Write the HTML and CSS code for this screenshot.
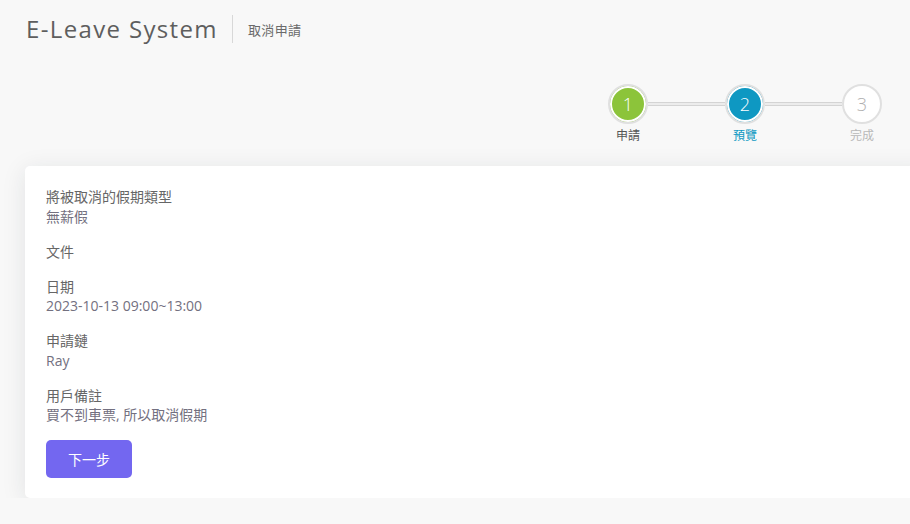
FILE: index.html
```html
<!DOCTYPE html>
<html lang="zh-Hant">
<head>
<meta charset="utf-8">
<title>E-Leave System</title>
<link rel="stylesheet" href="styles.css">
</head>
<body>
<header class="header">
  <h1 class="title">E-Leave System</h1>
  <span class="divider"></span>
  <span class="subtitle">取消申請</span>
</header>

<div class="steps">
  <div class="step done">
    <div class="circle">1</div>
    <div class="step-label">申請</div>
  </div>
  <div class="connector"></div>
  <div class="step active">
    <div class="circle">2</div>
    <div class="step-label">預覽</div>
  </div>
  <div class="connector"></div>
  <div class="step todo">
    <div class="circle">3</div>
    <div class="step-label">完成</div>
  </div>
</div>

<main class="card">
  <div class="field">
    <div class="label">將被取消的假期類型</div>
    <div class="value">無薪假</div>
  </div>
  <div class="field">
    <div class="label">文件</div>
  </div>
  <div class="field">
    <div class="label">日期</div>
    <div class="value">2023-10-13 09:00~13:00</div>
  </div>
  <div class="field">
    <div class="label">申請鏈</div>
    <div class="value">Ray</div>
  </div>
  <div class="field">
    <div class="label">用戶備註</div>
    <div class="value">買不到車票, 所以取消假期</div>
  </div>
  <button class="btn">下一步</button>
</main>
</body>
</html>
```

FILE: styles.css
```css
html, body {
  margin: 0;
  padding: 0;
}
body {
  background: #f8f8f8;
  font-family: "Open Sans", "Noto Sans CJK TC", sans-serif;
  color: #6e6b7b;
  overflow: hidden;
}
.header {
  display: flex;
  align-items: center;
  padding: 14px 26px 0 26px;
  height: 30px;
}
.title {
  margin: 0;
  font-size: 24px;
  font-weight: 400;
  color: #5e5e5e;
  letter-spacing: 1.35px;
  line-height: 30px;
}
.divider {
  width: 1px;
  height: 28px;
  background: #d8d8d8;
  margin: 0 15px 0 14px;
}
.subtitle {
  font-size: 13px;
  color: #6a6a6a;
  letter-spacing: 0.4px;
}
.steps {
  display: flex;
  justify-content: flex-end;
  padding: 40px 28px 0 0;
  height: 82px;
}
.step {
  display: flex;
  flex-direction: column;
  align-items: center;
  width: 40px;
}
.circle {
  width: 40px;
  height: 40px;
  box-sizing: border-box;
  border-radius: 50%;
  border: 2px solid #e0e0e0;
  box-shadow: inset 0 0 0 2px #fff;
  display: flex;
  align-items: center;
  justify-content: center;
  font-size: 18px;
  font-weight: 300;
  color: #fff;
}
.done .circle { background: #8cc43a; }
.active .circle { background: #0e98c2; }
.todo .circle { background: #fff; color: #b0b0b0; }
.step-label {
  margin-top: 3px;
  font-size: 12px;
  line-height: 18px;
  white-space: nowrap;
}
.done .step-label { color: #555; }
.active .step-label { color: #0e98c2; }
.todo .step-label { color: #b8b8b8; }
.connector {
  width: 77px;
  height: 4px;
  box-sizing: border-box;
  margin-top: 18px;
  background: #ececec;
  border-top: 1px solid #d4d4d4;
  border-bottom: 1px solid #d4d4d4;
}
.card {
  display: block;
  margin-left: 25px;
  margin-right: -20px;
  background: #fff;
  border-radius: 5px;
  box-shadow: 0 4px 24px rgba(34, 41, 47, 0.1);
  padding: 21px 21px 20px 21px;
}
.field {
  margin-bottom: 15.5px;
  font-size: 14px;
  line-height: 19.5px;
}
.label { color: #666; }
.value { color: #737080; }
.btn {
  display: block;
  width: 86px;
  height: 38px;
  border: none;
  border-radius: 5px;
  background: #7367f0;
  color: #fff;
  font-family: "Noto Sans CJK TC", sans-serif;
  font-size: 14px;
  cursor: pointer;
}
```
